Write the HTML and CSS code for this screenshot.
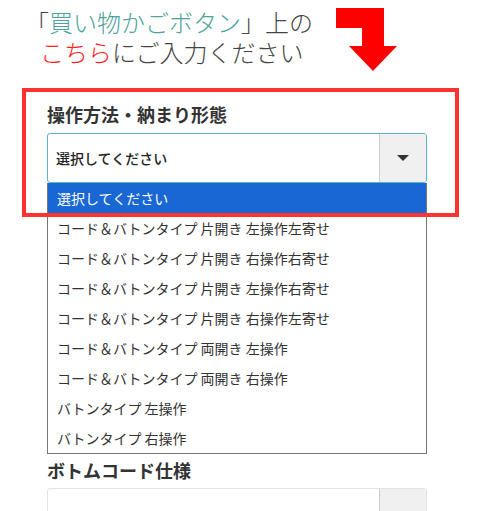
FILE: index.html
```html
<!DOCTYPE html>
<html lang="ja">
<head>
  <meta charset="UTF-8" />
  <meta name="viewport" content="width=device-width, initial-scale=1" />
  <title>ご注文内容の入力</title>
  <link rel="stylesheet" href="styles.css">
</head>
<body>
  <div class="intro">
    <p class="intro-title">
      <span class="bracket">「</span><span class="accent-green">買い物かごボタン</span>」上の<br>
      <span class="accent-red">こちら</span>にご入力ください
    </p>
    <svg class="intro-arrow" width="61" height="63" viewBox="0 0 61 63">
      <polygon points="0,0 48,0 48,38 61,38 37,63 13,38 26,38 26,20 0,20" fill="#ff0000" />
    </svg>
  </div>

  <form class="order-form">
    <div class="field field--focus">
      <label class="field-label">操作方法・納まり形態</label>
      <div class="select-box is-open">
        <span class="select-value">選択してください</span>
        <span class="select-toggle"><i class="caret"></i></span>
        <ul class="select-list">
          <li class="selected">選択してください</li>
          <li>コード＆バトンタイプ 片開き 左操作左寄せ</li>
          <li>コード＆バトンタイプ 片開き 右操作右寄せ</li>
          <li>コード＆バトンタイプ 片開き 左操作右寄せ</li>
          <li>コード＆バトンタイプ 片開き 右操作左寄せ</li>
          <li>コード＆バトンタイプ 両開き 左操作</li>
          <li>コード＆バトンタイプ 両開き 右操作</li>
          <li>バトンタイプ 左操作</li>
          <li>バトンタイプ 右操作</li>
        </ul>
      </div>
    </div>

    <div class="field field--next">
      <label class="field-label">ボトムコード仕様</label>
      <div class="select-box select-box--idle">
        <span class="select-value"></span>
        <span class="select-toggle"></span>
      </div>
    </div>
  </form>
</body>
</html>
```

FILE: styles.css
```css
body {
  margin: 0;
  background: #fff;
  font-family: "Noto Sans CJK JP", "Noto Sans", sans-serif;
  color: #333;
}
.intro {
  display: flex;
  align-items: flex-start;
  height: 88px;
  padding: 7px 0 0 40px;
  box-sizing: border-box;
}
.intro-title {
  width: 296px;
  margin: 0;
  font-size: 24px;
  line-height: 30px;
  font-weight: 300;
  color: #444;
  white-space: nowrap;
}
.bracket {
  margin-left: -3px;
  font-feature-settings: "halt";
}
.accent-green {
  color: #4fa29b;
}
.accent-red {
  color: #ff1e1e;
}
.intro-arrow {
  display: block;
  margin-top: 1px;
}
.order-form {
  margin: 0 53px 0 47px;
}
.field {
  position: relative;
}
.field--focus {
  padding-top: 14px;
}
/* red highlight frame drawn over the open list */
.field--focus::after {
  content: "";
  position: absolute;
  top: 0;
  left: -25px;
  right: -32px;
  height: 129px;
  border: 4px solid #ff3232;
  box-sizing: border-box;
  z-index: 3;
  pointer-events: none;
}
.field--next {
  margin-top: 275px;
}
.field-label {
  display: block;
  margin-bottom: 7px;
  font-size: 18px;
  line-height: 24px;
  font-weight: 700;
  color: #333;
}
.field--next .field-label {
  margin-bottom: 6px;
}
.select-box {
  position: relative;
  display: flex;
  height: 50px;
  border: 1px solid #e3e3e3;
  border-radius: 3px;
  box-sizing: border-box;
  background: #fff;
}
.select-box.is-open {
  border-color: #58b3c9;
}
.select-value {
  flex: 1;
  padding-left: 8px;
  font-size: 14px;
  line-height: 48px;
  font-weight: 500;
  color: #222;
}
.select-toggle {
  display: flex;
  align-items: center;
  justify-content: center;
  width: 46px;
  border-left: 1px solid #ccc;
  background: #f0f0f0;
  border-radius: 0 2px 2px 0;
}
.caret {
  width: 0;
  height: 0;
  border-left: 6px solid transparent;
  border-right: 6px solid transparent;
  border-top: 6px solid #333;
}
.select-list {
  position: absolute;
  top: calc(100% + 1px);
  left: -1px;
  right: -1px;
  margin: 0;
  padding: 0;
  list-style: none;
  border: 1px solid #767676;
  border-top: 0;
  background: #fff;
  z-index: 2;
}
.select-list li {
  height: 30px;
  padding-left: 9px;
  font-size: 14px;
  line-height: 30px;
  color: #333;
  white-space: nowrap;
}
.select-list li.selected {
  background: #1967d2;
  color: #fff;
}
```
